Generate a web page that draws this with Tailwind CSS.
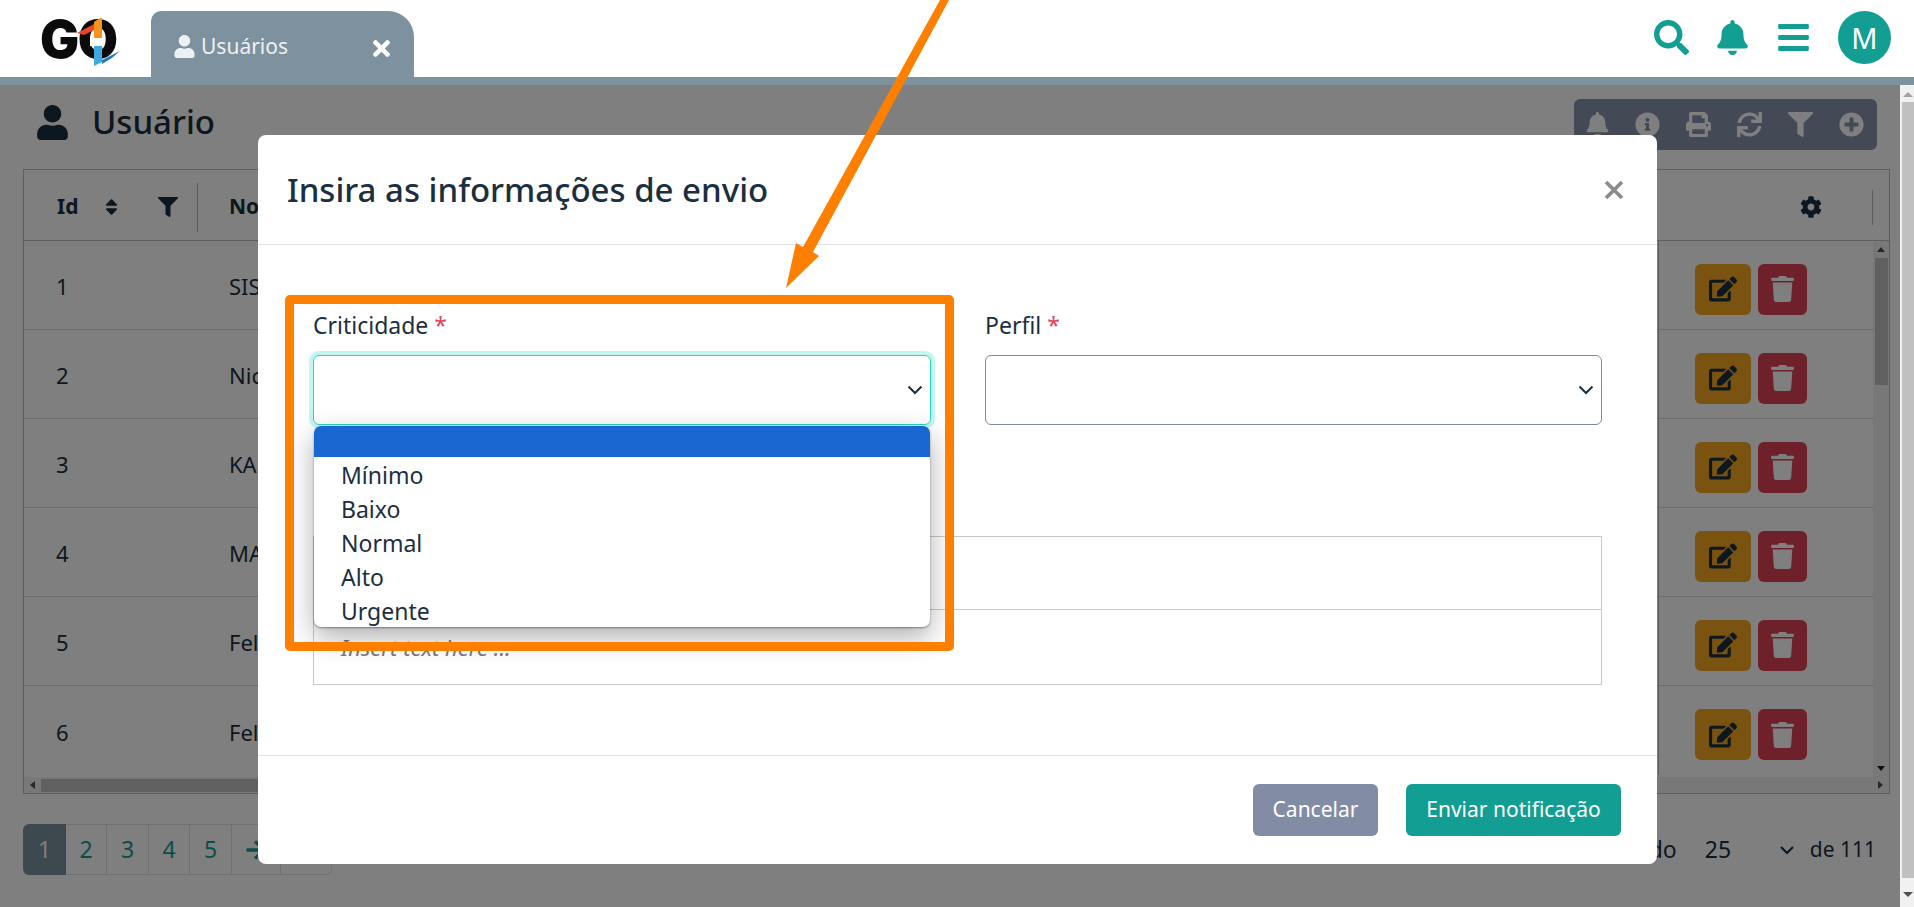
<!DOCTYPE html>
<html lang="pt-BR">
<head>
<meta charset="utf-8">
<title>Usuários</title>
<script src="https://cdn.jsdelivr.net/npm/@tailwindcss/browser@4"></script>
</head>
<body class="relative h-[907px] w-[1914px] overflow-hidden bg-white font-['Noto_Sans',sans-serif] text-[#1b2f3f]">

<!-- top bar -->
<header class="relative z-20 flex h-[85px] flex-col bg-white">
  <div class="flex h-[77px] items-end">
    <div class="relative ml-[40px] h-[77px] w-[111px] shrink-0">
      <span class="absolute left-[0px] top-[9px] font-['Inter',sans-serif] text-[52px] font-black leading-[62px] tracking-[-1.5px] text-[#0b0b0b]">GO</span>
      <svg class="absolute left-[32px] top-[16px]" width="54" height="52" viewBox="0 0 54 52">
        <rect x="18" y="20" width="14" height="10" fill="#fff"/>
        <polygon points="5,17 22,8 22,14 12,19" fill="#e8452a"/>
        <path d="M22 6 L28 2 L30 2 L30 22 L22 22Z" fill="#f7931e"/>
        <path d="M22 30 L30 30 L30 46 L22 50Z" fill="#3da9e0"/>
        <polygon points="30,44 48,35 40,42 30,48" fill="#1f7fb8"/>
      </svg>
    </div>
    <div class="flex h-[66px] w-[263px] shrink-0 items-center rounded-tl-[10px] rounded-tr-[26px] bg-[#7d929e] pl-[23px] pr-[24px] pt-[5px] text-[#eef1f3]">
      <svg class="h-[23px] w-[21px] fill-current" viewBox="0 0 448 512"><path d="M224 256c70.7 0 128-57.3 128-128S294.7 0 224 0 96 57.3 96 128s57.3 128 128 128zm89.6 32h-16.7c-22.2 10.2-46.9 16-72.9 16s-50.6-5.8-72.9-16h-16.7C60.2 288 0 348.2 0 422.4V464c0 26.5 21.5 48 48 48h352c26.5 0 48-21.5 48-48v-41.6c0-74.2-60.2-134.4-134.4-134.4z"/></svg>
      <span class="ml-[6px] text-[21px] leading-none">Usuários</span>
      <svg class="ml-auto mt-[4px] h-[25px] w-[17px] fill-white" viewBox="0 0 352 512"><path d="M242.72 256l100.07-100.07c12.28-12.28 12.28-32.19 0-44.48l-22.24-22.24c-12.28-12.28-32.19-12.28-44.48 0L176 189.28 75.93 89.21c-12.28-12.28-32.19-12.28-44.48 0L9.21 111.45c-12.28 12.28-12.28 32.19 0 44.48L109.28 256 9.21 356.07c-12.28 12.28-12.28 32.19 0 44.48l22.24 22.24c12.28 12.28 32.2 12.28 44.48 0L176 322.72l100.07 100.07c12.28 12.28 32.2 12.28 44.48 0l22.24-22.24c12.28-12.28 12.28-32.19 0-44.48L242.72 256z"/></svg>
    </div>
    <div class="ml-auto flex h-[77px] items-center pb-[2px] pr-[23px] text-[#129e92]">
      <svg class="h-[35px] w-[35px] fill-current" viewBox="0 0 512 512"><path d="M505 442.7L405.3 343c-4.5-4.5-10.6-7-17-7H372c27.6-35.3 44-79.7 44-128C416 93.1 322.9 0 208 0S0 93.1 0 208s93.1 208 208 208c48.3 0 92.7-16.4 128-44v16.3c0 6.4 2.5 12.5 7 17l99.7 99.7c9.4 9.4 24.6 9.4 33.9 0l28.3-28.3c9.4-9.4 9.4-24.6.1-34zM208 336c-70.7 0-128-57.2-128-128 0-70.7 57.2-128 128-128 70.7 0 128 57.2 128 128 0 70.7-57.2 128-128 128z"/></svg>
      <svg class="ml-[28px] h-[35px] w-[31px] fill-current" viewBox="0 0 448 512"><path d="M224 512c35.32 0 63.97-28.65 63.97-64H160.03c0 35.35 28.65 64 63.97 64zm215.39-149.71c-19.32-20.76-55.47-51.99-55.47-154.29 0-77.7-54.48-139.9-127.94-155.16V32c0-17.67-14.32-32-31.98-32s-31.98 14.33-31.98 32v20.84C118.56 68.1 64.08 130.3 64.08 208c0 102.3-36.15 133.53-55.47 154.29-6 6.45-8.66 14.16-8.61 21.71.11 16.4 12.98 32 32.1 32h383.8c19.12 0 32-15.6 32.1-32 .05-7.55-2.61-15.27-8.61-21.71z"/></svg>
      <svg class="ml-[30px] h-[35px] w-[31px] fill-current" viewBox="0 0 448 512"><path d="M16 132h416c8.837 0 16-7.163 16-16V76c0-8.837-7.163-16-16-16H16C7.163 60 0 67.163 0 76v40c0 8.837 7.163 16 16 16zm0 160h416c8.837 0 16-7.163 16-16v-40c0-8.837-7.163-16-16-16H16c-8.837 0-16 7.163-16 16v40c0 8.837 7.163 16 16 16zm0 160h416c8.837 0 16-7.163 16-16v-40c0-8.837-7.163-16-16-16H16c-8.837 0-16 7.163-16 16v40c0 8.837 7.163 16 16 16z"/></svg>
      <div class="ml-[29px] flex h-[53px] w-[53px] items-center justify-center rounded-full bg-[#129e92] text-[29px] leading-none text-white">M</div>
    </div>
  </div>
  <div class="h-[8px] bg-[#7d929e]"></div>
</header>

<div class="flex h-[822px]">
  <!-- page under the dim layer -->
  <main class="w-[1900px] shrink-0 pl-[23px] pr-[10px]">
    <div class="flex h-[84px] items-start justify-between">
      <div class="mt-[18px] flex items-center">
        <svg class="ml-[14px] h-[35px] w-[31px] fill-[#1b2f3f]" viewBox="0 0 448 512"><path d="M224 256c70.7 0 128-57.3 128-128S294.7 0 224 0 96 57.3 96 128s57.3 128 128 128zm89.6 32h-16.7c-22.2 10.2-46.9 16-72.9 16s-50.6-5.8-72.9-16h-16.7C60.2 288 0 348.2 0 422.4V464c0 26.5 21.5 48 48 48h352c26.5 0 48-21.5 48-48v-41.6c0-74.2-60.2-134.4-134.4-134.4z"/></svg>
        <h1 class="ml-[24px] text-[33px] font-medium leading-[38px]">Usuário</h1>
      </div>
      <div class="mr-[13px] mt-[14px] flex h-[51px] w-[303px] items-center gap-[26px] rounded-[6px] bg-[#8795ab] pl-[12px] text-white">
        <svg class="h-[25px] w-[23px] fill-current" viewBox="0 0 448 512"><path d="M224 512c35.32 0 63.97-28.65 63.97-64H160.03c0 35.35 28.65 64 63.97 64zm215.39-149.71c-19.32-20.76-55.47-51.99-55.47-154.29 0-77.7-54.48-139.9-127.94-155.16V32c0-17.67-14.32-32-31.98-32s-31.98 14.33-31.98 32v20.84C118.56 68.1 64.08 130.3 64.08 208c0 102.3-36.15 133.53-55.47 154.29-6 6.45-8.66 14.16-8.61 21.71.11 16.4 12.98 32 32.1 32h383.8c19.12 0 32-15.6 32.1-32 .05-7.55-2.61-15.27-8.61-21.71z"/></svg>
        <svg class="h-[25px] w-[25px] fill-current" viewBox="0 0 512 512"><path d="M256 8C119.043 8 8 119.083 8 256c0 136.997 111.043 248 248 248s248-111.003 248-248C504 119.083 392.957 8 256 8zm0 110c23.196 0 42 18.804 42 42s-18.804 42-42 42-42-18.804-42-42 18.804-42 42-42zm56 254c0 6.627-5.373 12-12 12h-88c-6.627 0-12-5.373-12-12v-24c0-6.627 5.373-12 12-12h12v-64h-12c-6.627 0-12-5.373-12-12v-24c0-6.627 5.373-12 12-12h64c6.627 0 12 5.373 12 12v100h12c6.627 0 12 5.373 12 12v24z"/></svg>
        <svg class="h-[25px] w-[25px] fill-current" viewBox="0 0 512 512"><path d="M448 192V77.25c0-8.49-3.37-16.62-9.37-22.63L393.37 9.37c-6-6-14.14-9.37-22.63-9.37H96C78.33 0 64 14.33 64 32v160c-35.35 0-64 28.65-64 64v112c0 8.84 7.16 16 16 16h48v96c0 17.67 14.33 32 32 32h320c17.67 0 32-14.33 32-32v-96h48c8.84 0 16-7.16 16-16V256c0-35.35-28.65-64-64-64zm-64 256H128v-96h256v96zm0-224H128V64h192v48c0 8.84 7.16 16 16 16h48v96zm48 72c-13.25 0-24-10.75-24-24 0-13.26 10.75-24 24-24s24 10.74 24 24c0 13.25-10.75 24-24 24z"/></svg>
        <svg class="h-[25px] w-[25px] fill-current" viewBox="0 0 512 512"><path d="M440.65 12.57l4 82.77A247.16 247.16 0 0 0 255.83 8C134.73 8 33.91 94.92 12.29 209.82A12 12 0 0 0 24.09 224h49.05a12 12 0 0 0 11.67-9.26 175.91 175.91 0 0 1 317-56.94l-101.46-4.86a12 12 0 0 0-12.57 12v47.41a12 12 0 0 0 12 12H500a12 12 0 0 0 12-12V12a12 12 0 0 0-12-12h-47.37a12 12 0 0 0-11.98 12.57zM255.83 432a175.61 175.61 0 0 1-146-77.8l101.8 4.87a12 12 0 0 0 12.57-12v-47.4a12 12 0 0 0-12-12H12a12 12 0 0 0-12 12V500a12 12 0 0 0 12 12h47.35a12 12 0 0 0 12-12.6l-4.15-82.57A247.17 247.17 0 0 0 255.83 504c121.11 0 221.93-86.92 243.55-201.82a12 12 0 0 0-11.8-14.18h-49.05a12 12 0 0 0-11.67 9.26A175.86 175.86 0 0 1 255.83 432z"/></svg>
        <svg class="h-[25px] w-[25px] fill-current" viewBox="0 0 512 512"><path d="M487.976 0H24.028C2.71 0-8.047 25.866 7.058 40.971L192 225.941V432c0 7.831 3.821 15.17 10.237 19.662l80 55.98C298.02 518.69 320 507.493 320 487.98V225.941l184.947-184.97C520.021 25.896 509.338 0 487.976 0z"/></svg>
        <svg class="h-[25px] w-[25px] fill-current" viewBox="0 0 512 512"><path d="M256 8C119 8 8 119 8 256s111 248 248 248 248-111 248-248S393 8 256 8zm144 276c0 6.6-5.4 12-12 12h-92v92c0 6.6-5.4 12-12 12h-56c-6.6 0-12-5.4-12-12v-92h-92c-6.6 0-12-5.4-12-12v-56c0-6.6 5.4-12 12-12h92v-92c0-6.6 5.4-12 12-12h56c6.6 0 12 5.4 12 12v92h92c6.6 0 12 5.4 12 12v56z"/></svg>
      </div>
    </div>

    <!-- table -->
    <section class="flex h-[625px] w-[1867px] flex-col border border-[#bdbdbd] text-[22px] text-[#1b2f3f]">
      <div class="flex h-[71px] shrink-0 items-center border-b border-[#bdbdbd] pt-[4px] text-[21px] font-bold">
        <span class="ml-[33px] w-[40px]">Id</span>
        <svg class="ml-[8px] h-[20px] w-[13px] fill-current" viewBox="0 0 320 512"><path d="M41 288h238c21.4 0 32.1 25.9 17 41L177 448c-9.4 9.4-24.6 9.4-33.9 0L24 329c-15.1-15.1-4.4-41 17-41zm255-105L177 64c-9.4-9.4-24.6-9.4-33.9 0L24 183c-15.1 15.1-4.4 41 17 41h238c21.4 0 32.1-25.9 17-41z"/></svg>
        <svg class="ml-[40px] h-[20px] w-[20px] fill-current" viewBox="0 0 512 512"><path d="M487.976 0H24.028C2.71 0-8.047 25.866 7.058 40.971L192 225.941V432c0 7.831 3.821 15.17 10.237 19.662l80 55.98C298.02 518.69 320 507.493 320 487.98V225.941l184.947-184.97C520.021 25.896 509.338 0 487.976 0z"/></svg>
        <div class="ml-[19px] h-[49px] w-px bg-[#bdbdbd]"></div>
        <span class="ml-[31px]">Nome</span>
        <svg class="ml-auto h-[22px] w-[22px] fill-current" viewBox="0 0 512 512"><path d="M487.4 315.7l-42.6-24.6c4.3-23.2 4.3-47 0-70.2l42.6-24.6c4.9-2.8 7.1-8.6 5.5-14-11.1-35.6-30-67.8-54.7-94.6-3.8-4.1-10-5.1-14.8-2.3L380.8 110c-17.9-15.4-38.5-27.3-60.8-35.1V25.8c0-5.6-3.9-10.5-9.4-11.7-36.7-8.2-74.3-7.8-109.2 0-5.5 1.2-9.4 6.1-9.4 11.7V75c-22.2 7.9-42.8 19.8-60.8 35.1L88.7 85.5c-4.9-2.8-11-1.9-14.8 2.3-24.7 26.7-43.6 58.9-54.7 94.6-1.7 5.4.6 11.2 5.5 14L67.3 221c-4.3 23.2-4.3 47 0 70.2l-42.6 24.6c-4.9 2.8-7.1 8.6-5.5 14 11.1 35.6 30 67.8 54.7 94.6 3.8 4.1 10 5.1 14.8 2.3l42.6-24.6c17.9 15.4 38.5 27.3 60.8 35.1v49.2c0 5.6 3.9 10.5 9.4 11.7 36.7 8.2 74.3 7.8 109.2 0 5.5-1.2 9.4-6.1 9.4-11.7v-49.2c22.2-7.9 42.8-19.8 60.8-35.1l42.6 24.6c4.9 2.8 11 1.9 14.8-2.3 24.7-26.7 43.6-58.9 54.7-94.6 1.5-5.5-.7-11.3-5.6-14.1zM256 336c-44.1 0-80-35.9-80-80s35.9-80 80-80 80 35.9 80 80-35.9 80-80 80z"/></svg>
        <div class="ml-[50px] mr-[16px] h-[35px] w-px bg-[#bdbdbd]"></div>
      </div>
      <div class="flex h-[536px] shrink-0">
        <div class="flex-1">
          <div class="flex h-[89px] items-center border-b border-[#d3d7de]"><span class="ml-[32px] mt-[3px] w-[173px]">1</span><span class="mt-[3px] flex-1">SISTEMA</span><div class="flex h-[88px] w-[215px] items-center gap-[7px] border-l border-[#bdbdbd] pl-[36px] pt-[8px]"><div class="flex h-[51px] w-[56px] items-center justify-center rounded-[6px] bg-[#f4a622]"><svg class="h-[28px] w-[28px] fill-[#1b2f3f]" viewBox="0 0 576 512"><path d="M402.6 83.2l90.2 90.2c3.8 3.8 3.8 10 0 13.8L274.4 405.6l-92.8 10.3c-12.4 1.4-22.9-9.1-21.5-21.5l10.3-92.8L388.8 83.2c3.8-3.8 10-3.8 13.8 0zm162-22.9l-48.8-48.8c-15.2-15.2-39.9-15.2-55.2 0l-35.4 35.4c-3.8 3.8-3.8 10 0 13.8l90.2 90.2c3.8 3.8 10 3.8 13.8 0l35.4-35.4c15.2-15.3 15.2-40 0-55.2zM384 346.2V448H64V128h229.8c3.2 0 6.2-1.3 8.5-3.5l40-40c7.6-7.6 2.2-20.5-8.5-20.5H48C21.5 64 0 85.5 0 112v352c0 26.5 21.5 48 48 48h352c26.5 0 48-21.5 48-48V306.2c0-10.7-12.9-16-20.5-8.5l-40 40c-2.2 2.3-3.5 5.3-3.5 8.5z"/></svg></div><div class="flex h-[51px] w-[49px] items-center justify-center rounded-[6px] bg-[#dc4357]"><svg class="h-[26px] w-[23px] fill-white" viewBox="0 0 448 512"><path d="M432 32H312l-9.4-18.7A24 24 0 0 0 281.1 0H166.8a23.72 23.72 0 0 0-21.4 13.3L136 32H16A16 16 0 0 0 0 48v32a16 16 0 0 0 16 16h416a16 16 0 0 0 16-16V48a16 16 0 0 0-16-16zM53.2 467a48 48 0 0 0 47.9 45h245.8a48 48 0 0 0 47.9-45L416 128H32z"/></svg></div></div></div>
          <div class="flex h-[89px] items-center border-b border-[#d3d7de]"><span class="ml-[32px] mt-[3px] w-[173px]">2</span><span class="mt-[3px] flex-1">Nicolas</span><div class="flex h-[88px] w-[215px] items-center gap-[7px] border-l border-[#bdbdbd] pl-[36px] pt-[8px]"><div class="flex h-[51px] w-[56px] items-center justify-center rounded-[6px] bg-[#f4a622]"><svg class="h-[28px] w-[28px] fill-[#1b2f3f]" viewBox="0 0 576 512"><path d="M402.6 83.2l90.2 90.2c3.8 3.8 3.8 10 0 13.8L274.4 405.6l-92.8 10.3c-12.4 1.4-22.9-9.1-21.5-21.5l10.3-92.8L388.8 83.2c3.8-3.8 10-3.8 13.8 0zm162-22.9l-48.8-48.8c-15.2-15.2-39.9-15.2-55.2 0l-35.4 35.4c-3.8 3.8-3.8 10 0 13.8l90.2 90.2c3.8 3.8 10 3.8 13.8 0l35.4-35.4c15.2-15.3 15.2-40 0-55.2zM384 346.2V448H64V128h229.8c3.2 0 6.2-1.3 8.5-3.5l40-40c7.6-7.6 2.2-20.5-8.5-20.5H48C21.5 64 0 85.5 0 112v352c0 26.5 21.5 48 48 48h352c26.5 0 48-21.5 48-48V306.2c0-10.7-12.9-16-20.5-8.5l-40 40c-2.2 2.3-3.5 5.3-3.5 8.5z"/></svg></div><div class="flex h-[51px] w-[49px] items-center justify-center rounded-[6px] bg-[#dc4357]"><svg class="h-[26px] w-[23px] fill-white" viewBox="0 0 448 512"><path d="M432 32H312l-9.4-18.7A24 24 0 0 0 281.1 0H166.8a23.72 23.72 0 0 0-21.4 13.3L136 32H16A16 16 0 0 0 0 48v32a16 16 0 0 0 16 16h416a16 16 0 0 0 16-16V48a16 16 0 0 0-16-16zM53.2 467a48 48 0 0 0 47.9 45h245.8a48 48 0 0 0 47.9-45L416 128H32z"/></svg></div></div></div>
          <div class="flex h-[89px] items-center border-b border-[#d3d7de]"><span class="ml-[32px] mt-[3px] w-[173px]">3</span><span class="mt-[3px] flex-1">KAUE</span><div class="flex h-[88px] w-[215px] items-center gap-[7px] border-l border-[#bdbdbd] pl-[36px] pt-[8px]"><div class="flex h-[51px] w-[56px] items-center justify-center rounded-[6px] bg-[#f4a622]"><svg class="h-[28px] w-[28px] fill-[#1b2f3f]" viewBox="0 0 576 512"><path d="M402.6 83.2l90.2 90.2c3.8 3.8 3.8 10 0 13.8L274.4 405.6l-92.8 10.3c-12.4 1.4-22.9-9.1-21.5-21.5l10.3-92.8L388.8 83.2c3.8-3.8 10-3.8 13.8 0zm162-22.9l-48.8-48.8c-15.2-15.2-39.9-15.2-55.2 0l-35.4 35.4c-3.8 3.8-3.8 10 0 13.8l90.2 90.2c3.8 3.8 10 3.8 13.8 0l35.4-35.4c15.2-15.3 15.2-40 0-55.2zM384 346.2V448H64V128h229.8c3.2 0 6.2-1.3 8.5-3.5l40-40c7.6-7.6 2.2-20.5-8.5-20.5H48C21.5 64 0 85.5 0 112v352c0 26.5 21.5 48 48 48h352c26.5 0 48-21.5 48-48V306.2c0-10.7-12.9-16-20.5-8.5l-40 40c-2.2 2.3-3.5 5.3-3.5 8.5z"/></svg></div><div class="flex h-[51px] w-[49px] items-center justify-center rounded-[6px] bg-[#dc4357]"><svg class="h-[26px] w-[23px] fill-white" viewBox="0 0 448 512"><path d="M432 32H312l-9.4-18.7A24 24 0 0 0 281.1 0H166.8a23.72 23.72 0 0 0-21.4 13.3L136 32H16A16 16 0 0 0 0 48v32a16 16 0 0 0 16 16h416a16 16 0 0 0 16-16V48a16 16 0 0 0-16-16zM53.2 467a48 48 0 0 0 47.9 45h245.8a48 48 0 0 0 47.9-45L416 128H32z"/></svg></div></div></div>
          <div class="flex h-[89px] items-center border-b border-[#d3d7de]"><span class="ml-[32px] mt-[3px] w-[173px]">4</span><span class="mt-[3px] flex-1">MARCOS</span><div class="flex h-[88px] w-[215px] items-center gap-[7px] border-l border-[#bdbdbd] pl-[36px] pt-[8px]"><div class="flex h-[51px] w-[56px] items-center justify-center rounded-[6px] bg-[#f4a622]"><svg class="h-[28px] w-[28px] fill-[#1b2f3f]" viewBox="0 0 576 512"><path d="M402.6 83.2l90.2 90.2c3.8 3.8 3.8 10 0 13.8L274.4 405.6l-92.8 10.3c-12.4 1.4-22.9-9.1-21.5-21.5l10.3-92.8L388.8 83.2c3.8-3.8 10-3.8 13.8 0zm162-22.9l-48.8-48.8c-15.2-15.2-39.9-15.2-55.2 0l-35.4 35.4c-3.8 3.8-3.8 10 0 13.8l90.2 90.2c3.8 3.8 10 3.8 13.8 0l35.4-35.4c15.2-15.3 15.2-40 0-55.2zM384 346.2V448H64V128h229.8c3.2 0 6.2-1.3 8.5-3.5l40-40c7.6-7.6 2.2-20.5-8.5-20.5H48C21.5 64 0 85.5 0 112v352c0 26.5 21.5 48 48 48h352c26.5 0 48-21.5 48-48V306.2c0-10.7-12.9-16-20.5-8.5l-40 40c-2.2 2.3-3.5 5.3-3.5 8.5z"/></svg></div><div class="flex h-[51px] w-[49px] items-center justify-center rounded-[6px] bg-[#dc4357]"><svg class="h-[26px] w-[23px] fill-white" viewBox="0 0 448 512"><path d="M432 32H312l-9.4-18.7A24 24 0 0 0 281.1 0H166.8a23.72 23.72 0 0 0-21.4 13.3L136 32H16A16 16 0 0 0 0 48v32a16 16 0 0 0 16 16h416a16 16 0 0 0 16-16V48a16 16 0 0 0-16-16zM53.2 467a48 48 0 0 0 47.9 45h245.8a48 48 0 0 0 47.9-45L416 128H32z"/></svg></div></div></div>
          <div class="flex h-[89px] items-center border-b border-[#d3d7de]"><span class="ml-[32px] mt-[3px] w-[173px]">5</span><span class="mt-[3px] flex-1">Felipe</span><div class="flex h-[88px] w-[215px] items-center gap-[7px] border-l border-[#bdbdbd] pl-[36px] pt-[8px]"><div class="flex h-[51px] w-[56px] items-center justify-center rounded-[6px] bg-[#f4a622]"><svg class="h-[28px] w-[28px] fill-[#1b2f3f]" viewBox="0 0 576 512"><path d="M402.6 83.2l90.2 90.2c3.8 3.8 3.8 10 0 13.8L274.4 405.6l-92.8 10.3c-12.4 1.4-22.9-9.1-21.5-21.5l10.3-92.8L388.8 83.2c3.8-3.8 10-3.8 13.8 0zm162-22.9l-48.8-48.8c-15.2-15.2-39.9-15.2-55.2 0l-35.4 35.4c-3.8 3.8-3.8 10 0 13.8l90.2 90.2c3.8 3.8 10 3.8 13.8 0l35.4-35.4c15.2-15.3 15.2-40 0-55.2zM384 346.2V448H64V128h229.8c3.2 0 6.2-1.3 8.5-3.5l40-40c7.6-7.6 2.2-20.5-8.5-20.5H48C21.5 64 0 85.5 0 112v352c0 26.5 21.5 48 48 48h352c26.5 0 48-21.5 48-48V306.2c0-10.7-12.9-16-20.5-8.5l-40 40c-2.2 2.3-3.5 5.3-3.5 8.5z"/></svg></div><div class="flex h-[51px] w-[49px] items-center justify-center rounded-[6px] bg-[#dc4357]"><svg class="h-[26px] w-[23px] fill-white" viewBox="0 0 448 512"><path d="M432 32H312l-9.4-18.7A24 24 0 0 0 281.1 0H166.8a23.72 23.72 0 0 0-21.4 13.3L136 32H16A16 16 0 0 0 0 48v32a16 16 0 0 0 16 16h416a16 16 0 0 0 16-16V48a16 16 0 0 0-16-16zM53.2 467a48 48 0 0 0 47.9 45h245.8a48 48 0 0 0 47.9-45L416 128H32z"/></svg></div></div></div>
          <div class="flex h-[89px] items-center"><span class="ml-[32px] mt-[3px] w-[173px]">6</span><span class="mt-[3px] flex-1">Felipe</span><div class="flex h-[89px] w-[215px] items-center gap-[7px] border-l border-[#bdbdbd] pl-[36px] pt-[8px]"><div class="flex h-[51px] w-[56px] items-center justify-center rounded-[6px] bg-[#f4a622]"><svg class="h-[28px] w-[28px] fill-[#1b2f3f]" viewBox="0 0 576 512"><path d="M402.6 83.2l90.2 90.2c3.8 3.8 3.8 10 0 13.8L274.4 405.6l-92.8 10.3c-12.4 1.4-22.9-9.1-21.5-21.5l10.3-92.8L388.8 83.2c3.8-3.8 10-3.8 13.8 0zm162-22.9l-48.8-48.8c-15.2-15.2-39.9-15.2-55.2 0l-35.4 35.4c-3.8 3.8-3.8 10 0 13.8l90.2 90.2c3.8 3.8 10 3.8 13.8 0l35.4-35.4c15.2-15.3 15.2-40 0-55.2zM384 346.2V448H64V128h229.8c3.2 0 6.2-1.3 8.5-3.5l40-40c7.6-7.6 2.2-20.5-8.5-20.5H48C21.5 64 0 85.5 0 112v352c0 26.5 21.5 48 48 48h352c26.5 0 48-21.5 48-48V306.2c0-10.7-12.9-16-20.5-8.5l-40 40c-2.2 2.3-3.5 5.3-3.5 8.5z"/></svg></div><div class="flex h-[51px] w-[49px] items-center justify-center rounded-[6px] bg-[#dc4357]"><svg class="h-[26px] w-[23px] fill-white" viewBox="0 0 448 512"><path d="M432 32H312l-9.4-18.7A24 24 0 0 0 281.1 0H166.8a23.72 23.72 0 0 0-21.4 13.3L136 32H16A16 16 0 0 0 0 48v32a16 16 0 0 0 16 16h416a16 16 0 0 0 16-16V48a16 16 0 0 0-16-16zM53.2 467a48 48 0 0 0 47.9 45h245.8a48 48 0 0 0 47.9-45L416 128H32z"/></svg></div></div></div>
        </div>
        <!-- inner vertical scrollbar -->
        <div class="flex w-[16px] shrink-0 flex-col items-center bg-[#f1f1f1] pt-[6px]">
          <div class="h-0 w-0 border-x-[4px] border-b-[5px] border-x-transparent border-b-[#505050]"></div>
          <div class="mt-[6px] h-[127px] w-[13px] bg-[#c1c1c1]"></div>
          <div class="mt-auto mb-[6px] h-0 w-0 border-x-[4px] border-t-[5px] border-x-transparent border-t-[#202020]"></div>
        </div>
      </div>
      <!-- inner horizontal scrollbar -->
      <div class="flex h-[16px] shrink-0 items-center bg-[#f1f1f1] pl-[6px] pr-[6px]">
        <div class="h-0 w-0 border-y-[4px] border-r-[5px] border-y-transparent border-r-[#505050]"></div>
        <div class="ml-[6px] h-[13px] w-[1500px] bg-[#c1c1c1]"></div>
        <div class="ml-auto h-0 w-0 border-y-[4px] border-l-[5px] border-y-transparent border-l-[#505050]"></div>
      </div>
    </section>

    <!-- pagination -->
    <div class="mt-[30px] flex h-[51px] w-[1867px] items-center text-[23px]">
      <div class="flex h-[51px] text-[#129e92]">
        <span class="flex w-[43px] items-center justify-center rounded-l-[6px] bg-[#7d929e] text-white">1</span>
        <span class="flex w-[41px] items-center justify-center border-y border-r border-[#dee2e6]">2</span>
        <span class="flex w-[42px] items-center justify-center border-y border-r border-[#dee2e6]">3</span>
        <span class="flex w-[41px] items-center justify-center border-y border-r border-[#dee2e6]">4</span>
        <span class="flex w-[42px] items-center justify-center border-y border-r border-[#dee2e6]">5</span>
        <span class="flex w-[49px] items-center justify-start border-y border-r border-[#dee2e6] pl-[14px]"><svg class="h-[22px] w-[20px] fill-current" viewBox="0 0 448 512"><path d="M190.5 66.9l22.2-22.2c9.4-9.4 24.6-9.4 33.9 0L441 239c9.4 9.4 9.4 24.6 0 33.9L246.6 467.3c-9.4 9.4-24.6 9.4-33.9 0l-22.2-22.2c-9.5-9.5-9.3-25 .4-34.3L311.4 296H24c-13.3 0-24-10.7-24-24v-32c0-13.3 10.7-24 24-24h287.4L190.9 101.2c-9.8-9.3-10-24.8-.4-34.3z"/></svg></span>
        <span class="w-[51px] rounded-r-[6px] border-y border-r border-[#dee2e6]"></span>
      </div>
      <span class="ml-auto text-[#1b2f3f]">Exibindo</span>
      <span class="ml-[28px] w-[74px] text-[#1b2f3f]">25</span>
      <svg class="h-[12px] w-[16px] text-[#1b2f3f]" viewBox="0 0 16 12" fill="none" stroke="currentColor" stroke-width="2.2"><path d="M2 3l6 6 6-6"/></svg>
      <span class="ml-[15px] mr-[14px] text-[21px] text-[#1b2f3f]">de 111</span>
    </div>
  </main>
  <!-- page scrollbar -->
  <aside class="flex w-[14px] shrink-0 flex-col items-center bg-[#f1f1f1] pl-[2px]">
    <div class="mt-[7px] h-0 w-0 border-x-[5px] border-b-[5px] border-x-transparent border-b-[#a3a3a3]"></div>
    <div class="mt-[5px] h-[776px] w-full bg-[#c0c0c0]"></div>
    <div class="mt-[14px] h-0 w-0 border-x-[5px] border-t-[5px] border-x-transparent border-t-[#505050]"></div>
  </aside>
</div>

<!-- dim layer -->
<div class="absolute bottom-0 left-0 top-[85px] z-10 w-[1900px] bg-black/50"></div>

<!-- modal -->
<div class="absolute left-[258px] top-[135px] z-30 flex h-[729px] w-[1399px] flex-col rounded-[8px] bg-white">
  <div class="flex h-[110px] shrink-0 items-center justify-between border-b border-[#dfe2ea] pl-[29px] pr-[33px]">
    <h2 class="text-[33px] font-medium leading-[42px] text-[#1b2f3f]">Insira as informações de envio</h2>
    <svg class="h-[20px] w-[20px] text-[#8a8a8a]" viewBox="0 0 20 20" fill="none" stroke="currentColor" stroke-width="3.6"><path d="M2 2l16 16M18 2L2 18"/></svg>
  </div>
  <div class="h-[510px] shrink-0 px-[55px] pt-[64px]">
    <div class="grid grid-cols-[618px_617px] gap-x-[54px]">
      <div class="relative">
        <label class="block text-[23px] leading-[32px]">Criticidade <span class="text-[#e0455a]">*</span></label>
        <div class="mt-[14px] flex h-[70px] items-center justify-end rounded-[6px] border border-[#2dd4c4] pr-[7px] shadow-[0_0_0_4px_#c4f6f0]">
          <svg class="h-[10px] w-[16px]" viewBox="0 0 16 10" fill="none" stroke="#1b2f3f" stroke-width="2"><path d="M1.5 1.5l6.5 6.5 6.5-6.5"/></svg>
        </div>
        <ul class="absolute left-[1px] top-[117px] h-[201px] w-[616px] overflow-hidden rounded-[7px] bg-white text-[23px] leading-[34px] text-[#1b2f3f] shadow-[0_1px_2px_rgba(0,0,0,0.4),0_10px_28px_rgba(0,0,0,0.32)]">
          <li class="h-[31px] bg-[#1a67d2]"></li>
          <li class="pl-[27px] pt-[1px] h-[34px]">Mínimo</li>
          <li class="pl-[27px] pt-[1px] h-[34px]">Baixo</li>
          <li class="pl-[27px] pt-[1px] h-[34px]">Normal</li>
          <li class="pl-[27px] pt-[1px] h-[34px]">Alto</li>
          <li class="pl-[27px] pt-[1px] h-[34px]">Urgente</li>
        </ul>
      </div>
      <div>
        <label class="block text-[23px] leading-[32px]">Perfil <span class="text-[#e0455a]">*</span></label>
        <div class="mt-[14px] flex h-[70px] items-center justify-end rounded-[6px] border border-[#7e8aa0] pr-[7px]">
          <svg class="h-[10px] w-[16px]" viewBox="0 0 16 10" fill="none" stroke="#1b2f3f" stroke-width="2"><path d="M1.5 1.5l6.5 6.5 6.5-6.5"/></svg>
        </div>
      </div>
    </div>
    <div class="mt-[111px] h-[149px] w-[1289px] border border-[#c8c8c8]">
      <div class="h-[73px] border-b border-[#c8c8c8]"></div>
      <div class="flex h-[74px] items-center pl-[27px] text-[22px] italic text-[#7a7a7a]">Insert text here ...</div>
    </div>
  </div>
  <div class="flex h-[109px] shrink-0 items-center justify-end gap-[28px] border-t border-[#e0e0e0] pr-[36px] text-[21px] text-white">
    <button class="h-[52px] w-[125px] rounded-[6px] bg-[#828ca5]">Cancelar</button>
    <button class="h-[52px] w-[215px] rounded-[6px] bg-[#129e92]">Enviar notificação</button>
  </div>
</div>

<!-- annotation -->
<div class="absolute left-[285px] top-[295px] z-40 h-[356px] w-[669px] rounded-[5px] border-[9px] border-[#ff8000]"></div>
<svg class="absolute left-0 top-0 z-40" width="1000" height="300" viewBox="0 0 1000 300"><polygon points="940,0 949,0 813,252 819,256 786,288 796,243 803,247" fill="#ff8000"/></svg>
</body>
</html>
